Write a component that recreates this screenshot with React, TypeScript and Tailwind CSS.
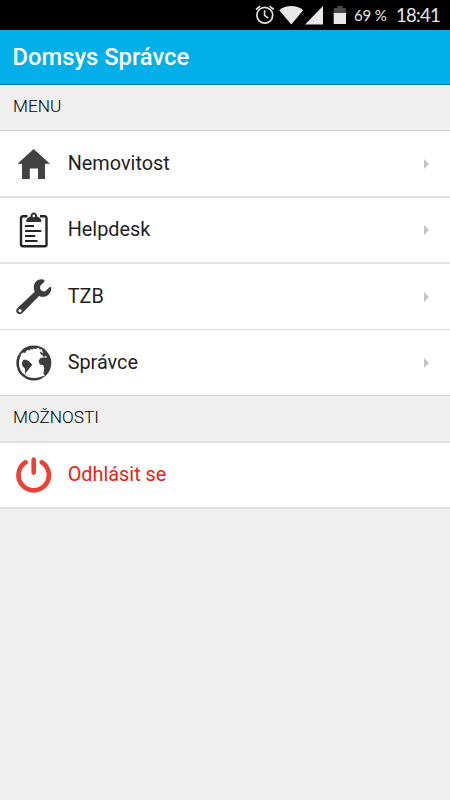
import type { ReactNode } from "react";

function HomeIcon() {
  return (
    <svg viewBox="0 0 36 36" className="h-9 w-9" fill="#424242">
      <path d="M17.6 3 34 17.8h-5V33h-7V22.5h-8.2V33H6V17.8H1.5z" />
    </svg>
  );
}

function ClipboardIcon() {
  return (
    <svg viewBox="0 0 36 36" className="h-9 w-9" fill="#303030">
      <path
        d="M11.500 4.200H7a2 2 0 0 0-2 2V32.2a2 2 0 0 0 2 2h22a1.500 1.500 0 0 0 1.500-1.500V6.200a2 2 0 0 0-2-2H24"
        fill="none"
        stroke="#242424"
        strokeWidth="2.400"
      />
      <path
        fillRule="evenodd"
        d="M10.300 10V8.500c.1-1.800 1.700-3 4-3.700.3-2.600 1.500-4.200 3.500-4.200s3.200 1.600 3.500 4.200c2.300.7 3.900 1.900 4 3.700V10zM17.800 2.600a1.300 1.300 0 1 0 0 2.600 1.300 1.300 0 0 0 0-2.600z"
      />
      <path d="M9 14h9M9 19h16.200M9 24h10.200M9 29h12.500" fill="none" stroke="#242424" strokeWidth="2" />
    </svg>
  );
}

function WrenchIcon() {
  return (
    <svg viewBox="0 0 36 36" className="h-9 w-9" fill="#3c3c3c">
      <path
        fillRule="evenodd"
        d="M25.500.3c-4.400 0-7.600 3.400-7.700 7.700 0 2 .4 3.300.9 4.700L1.300 29.200c-1.500 1.500-1.400 3.700 0 5 1.400 1.300 3.600 1.300 5.100-.2L23 16.900c1.200.6 2.400.9 3.800.9 4.800 0 8.500-3.800 8.500-8.600 0-1-.8-1.700-1.600-1.100l-4.200 4c-1.600.7-3.700.1-4.800-1.400-.9-1.200-.9-3-.2-4.200l3.600-3.500c.8-.9.4-2.300-.9-2.600zM4 30.100a1.600 1.600 0 1 1 0 3.200 1.600 1.600 0 0 1 0-3.200z"
      />
    </svg>
  );
}

function GlobeIcon() {
  return (
    <svg viewBox="0 0 36 36" className="h-9 w-9" fill="#3c3c3c">
      <circle cx="17.800" cy="18" r="17.500" />
      <path
        d="M4.600 9.200 7.100 7.600 9 8l2.200-3 2.300.6 1-1.600 2 .8.800-1.300 2.500.4 2.700-1.200 1.200 1.800 2-.6 1.200 3.500-1.600 2.200 2.700 1.700 2.400-.2.400 1.700-3-.5-3.600 1-1.700 2.800 1.400 3.500 3.500.7.900 3.600-.9 4.600 1.400 2.300C26.200 31.200 22.300 33 17.800 33c-3.400 0-6.300-.9-8.400-2.500L9.700 28l6.600-8.300-3-3.300-3.200-1.600-2.600-.1-1.600 3 .5 3.300 2.500 2.500.4 6.800C5.200 27.500 3 23.500 3 18.700c0-3.500.8-6.500 2-8.300z"
        fill="#fff"
      />
      <path d="M24.800 6.500l1.500 2-1 1.200-1.500-2zM27.500 9.500l1.500 1-.8 1.500-1.200-1z" />
    </svg>
  );
}

function PowerIcon() {
  return (
    <svg
      viewBox="0 0 36 36"
      className="h-9 w-9"
      fill="none"
      stroke="#ef4035"
      strokeWidth="4.600"
      strokeLinecap="round"
    >
      <path d="M17.700 2.600v13M9.600 5.300a15.200 15.200 0 1 0 16.200 0" />
    </svg>
  );
}

const items = [
  { label: "Nemovitost", icon: <HomeIcon />, row: "h-[67px] border-b-2 border-[#e4e4e4]" },
  { label: "Helpdesk", icon: <ClipboardIcon />, row: "h-[66px] border-b-2 border-[#e4e4e4]" },
  { label: "TZB", icon: <WrenchIcon />, row: "h-[66px] border-b border-[#d8d8d8]" },
  { label: "Správce", icon: <GlobeIcon />, row: "h-[66px] border-b border-[#d8d8d8]" },
];

function StatusBar() {
  return (
    <div className="flex h-[30px] bg-black font-[Lato,sans-serif] text-[#e6e6e6]">
      <svg viewBox="0 0 100 30" className="ml-[250px] h-[30px] w-[100px] shrink-0" fill="#e8e8e8">
        <g fill="none" stroke="#e0e0e0" strokeWidth="1.700">
          <circle cx="14.800" cy="15.300" r="7.900" />
          <path d="M14.600 10.300v5l3.600 2.800M6 9.500l4-3.400M19.700 6.100l4 3.400" />
        </g>
        <path d="M29.200 10.200c7-5.500 17-5.500 24 0L41.300 24.600z" />
        <path d="M73 6v18.500H55z" />
        <path d="M83.700 8h3.500V6h5.300v2H96v5H83.700z" fill="#484848" />
        <path d="M83.700 13H96v11H83.700z" />
      </svg>
      <span className="ml-[4px] w-[42px] shrink-0 pt-px text-[15px] leading-[29px] tracking-[-0.2px] whitespace-nowrap">
        69 %
      </span>
      <span className="shrink-0 pt-px text-[18.5px] leading-[29px] tracking-[-0.7px] whitespace-nowrap">18:41</span>
    </div>
  );
}

function SectionTitle({ className, children }: { className: string; children: ReactNode }) {
  return (
    <h2 className={`bg-[#efefef] pl-[13px] text-[17.3px] leading-[43px] font-light text-black ${className}`}>
      {children}
    </h2>
  );
}

export default function App() {
  return (
    <div className="min-h-screen w-full bg-[#efefef] font-[Roboto,sans-serif]">
      <StatusBar />

      {/* Header */}
      <header className="h-[55px] border-b border-[#087ead] bg-[#03afe8] pl-[12.5px]">
        <h1 className="text-[23.75px] leading-[54px] font-medium text-white">Domsys Správce</h1>
      </header>

      <SectionTitle className="h-[46px] border-b border-[#d4d4d4]">MENU</SectionTitle>
      <ul>
        {items.map((item) => (
          <li key={item.label} className={`flex items-center bg-white pr-[21px] pl-4 ${item.row}`}>
            {item.icon}
            <span className="ml-[15.7px] flex-1 pt-[0.4px] text-[19.85px] leading-[30px] text-[#1f1f1f]">
              {item.label}
            </span>
            <svg viewBox="0 0 5 10" className="h-[10px] w-[5px]" fill="#c4c4c4">
              <path d="M0 0l5 5-5 5z" />
            </svg>
          </li>
        ))}
      </ul>

      <SectionTitle className="h-[47px] border-b-2 border-[#e0e0e0]">MOŽNOSTI</SectionTitle>
      <div className="flex h-[66px] items-center border-b-2 border-[#e2e2e2] bg-white pl-4">
        <PowerIcon />
        <span className="ml-[15.7px] pb-px text-[19.85px] text-[#f01b12]">Odhlásit se</span>
      </div>
    </div>
  );
}
